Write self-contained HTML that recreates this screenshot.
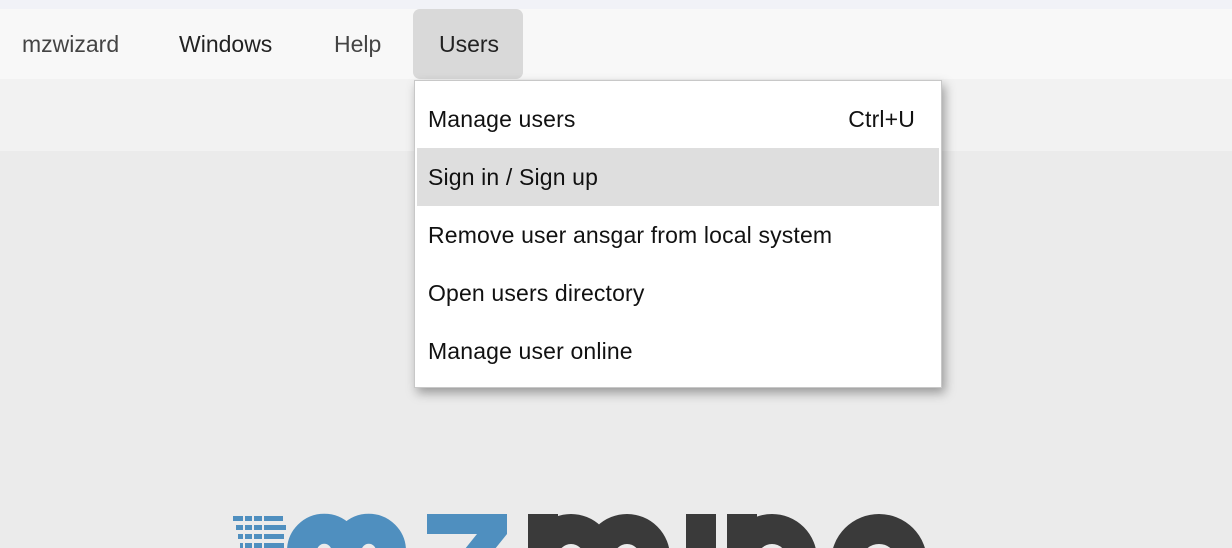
<!DOCTYPE html>
<html><head><meta charset="utf-8"><style>
html,body{margin:0;padding:0;width:1232px;height:548px;overflow:hidden;background:#ebebeb;font-family:"Liberation Sans","DejaVu Sans",sans-serif}
.top{position:absolute;left:0;top:0;width:1232px;height:9px;background:#f1f2f7}
.bar{position:absolute;left:0;top:9px;width:1232px;height:70px;background:#f8f8f8}
.tool{position:absolute;left:0;top:79px;width:1232px;height:72px;background:#f2f2f2}
.mi{position:absolute;top:9px;height:70px;line-height:70px;font-size:23px;color:#222}
.users{position:absolute;left:413px;top:9px;width:110px;height:70px;background:#d9d9d9;border-radius:7px}
.menu{position:absolute;left:414px;top:80px;width:526px;height:306px;background:#fff;border:1px solid #c8c8c8;box-shadow:3px 5px 10px rgba(0,0,0,0.35)}
.it{position:absolute;left:2px;width:522px;height:58px;line-height:58px;font-size:23px;color:#111;padding-left:11px;box-sizing:border-box;letter-spacing:0.15px}
.hl{background:#dedede}
</style></head><body>
<div class="top"></div><div class="bar"></div><div class="tool"></div>
<div class="users"></div>
<div class="mi" style="left:22px;color:#444">mzwizard</div>
<div class="mi" style="left:179px">Windows</div>
<div class="mi" style="left:334px;color:#444">Help</div>
<div class="mi" style="left:439px">Users</div>
<div class="menu">
<div class="it" style="top:9px">Manage users<span style="position:absolute;right:24px">Ctrl+U</span></div>
<div class="it hl" style="top:67px">Sign in / Sign up</div>
<div class="it" style="top:125px">Remove user ansgar from local system</div>
<div class="it" style="top:183px">Open users directory</div>
<div class="it" style="top:241px">Manage user online</div>
</div>
<svg style="position:absolute;left:0;top:0" width="1232" height="548">
<g fill="#4f8fbf">
<rect x="233" y="516" width="50" height="5"/><rect x="236" y="525" width="50" height="5"/><rect x="238" y="534" width="46" height="5"/><rect x="240" y="543" width="44" height="5"/>
</g>
<g fill="#ebebeb"><rect x="243" y="514" width="2" height="34"/><rect x="252" y="514" width="2" height="34"/><rect x="262" y="514" width="2" height="34"/></g>
<g fill="none" stroke="#4f8fbf" stroke-width="30">
<path d="M302 600 V551 A22 22 0 0 1 346.5 551 V600 M346.5 551 A22 22 0 0 1 391 551 V600"/>
</g>
<polygon fill="#4f8fbf" points="427,514 507,514 507,534 470,580 440,580 477,534 427,534"/>
<g fill="none" stroke="#3a3a3a" stroke-width="30">
<path d="M543 600 V514 M543 557 A28 28 0 0 1 599 557 V600 M599 557 A28 28 0 0 1 655 557 V600"/>
<path d="M742 600 V514 M742 559 A30 30 0 0 1 802 559 V600"/>
<circle cx="879" cy="562" r="33"/>
</g>
<rect x="686" y="514" width="30" height="40" fill="#3a3a3a"/>
</svg>
</body></html>
